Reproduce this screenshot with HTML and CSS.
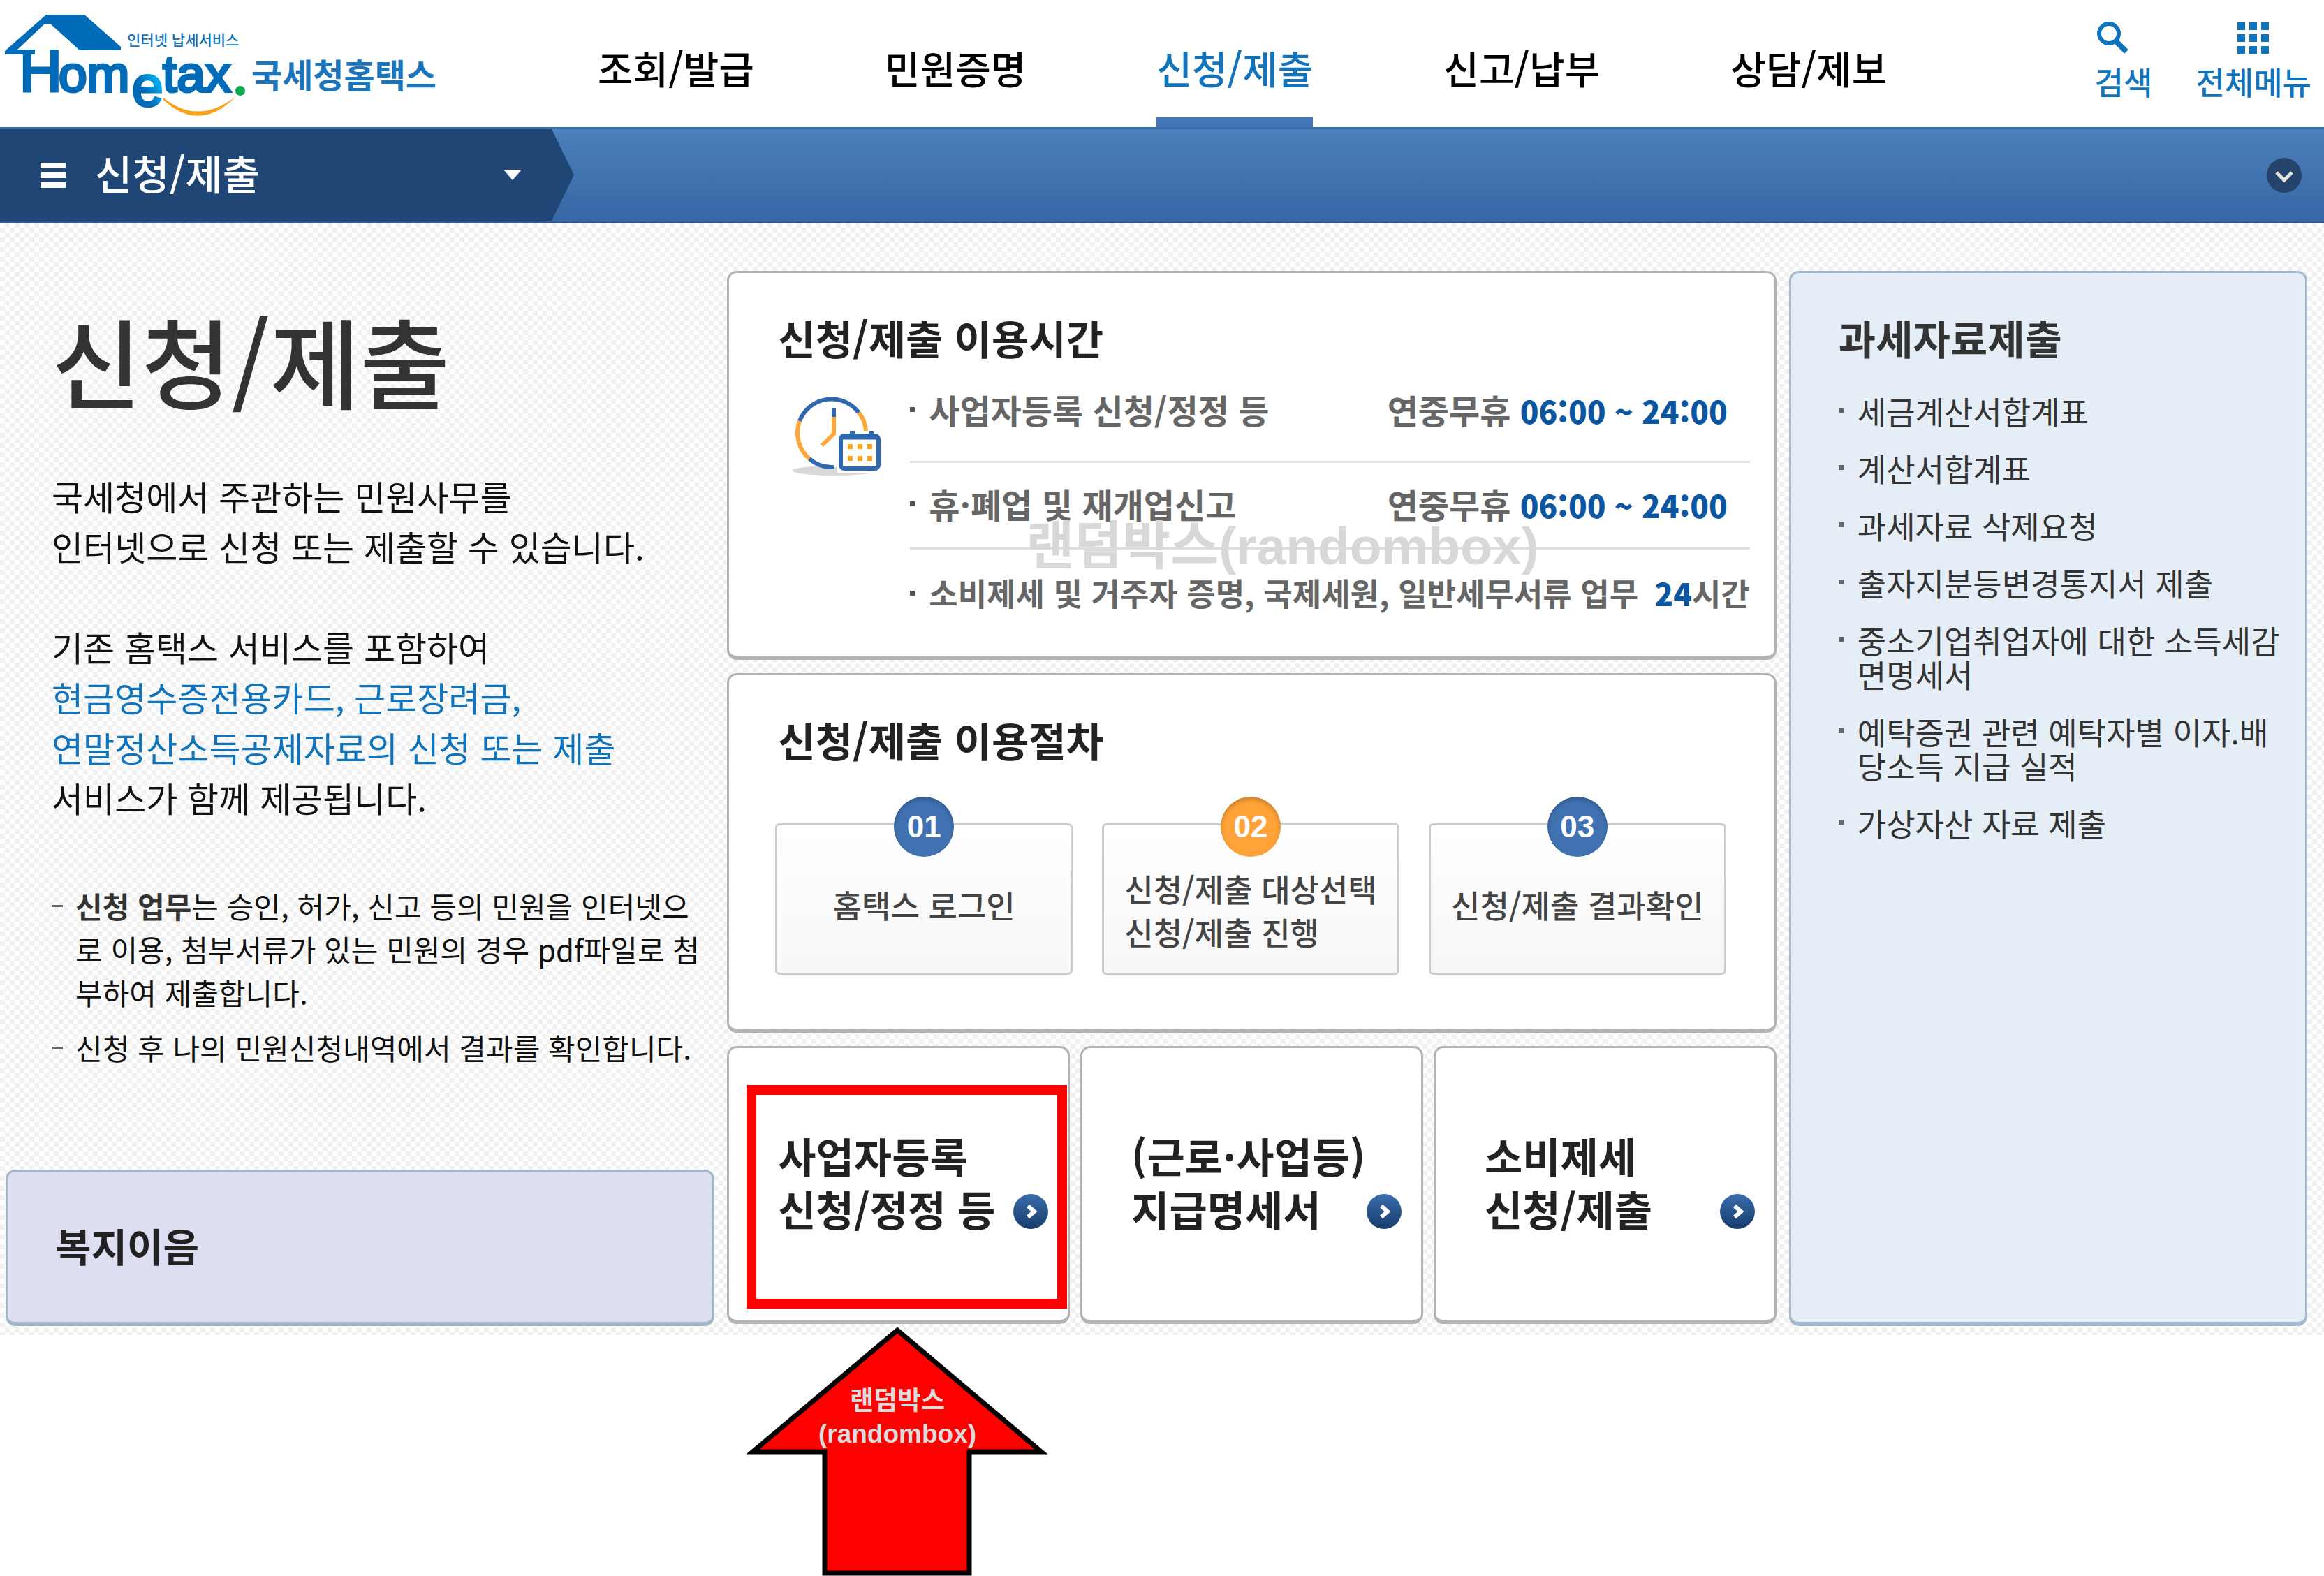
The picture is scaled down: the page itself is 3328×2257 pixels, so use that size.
FILE: index.html
```html
<!DOCTYPE html>
<html lang="ko">
<head>
  <meta charset="UTF-8">
  <meta name="viewport" content="width=device-width, initial-scale=1.0">
  <title>국세청홈택스 - 신청/제출</title>
  <link rel="stylesheet" href="styles.css">
</head>
<body>
  <!-- 상단 헤더 -->
  <header class="header">
    <a class="logo" href="#">
      <svg width="640" height="180" viewBox="0 0 640 180" role="img" aria-label="Hometax 국세청홈택스">
        <defs>
          <linearGradient id="eGrad" x1="0" y1="1" x2="1" y2="0">
            <stop offset="0.4" stop-color="#006bb8"/>
            <stop offset="0.75" stop-color="#00b4f0"/>
          </linearGradient>
        </defs>
        <path fill="#006bb8" d="M7 78V73L66 21H121L173 67V72H114L72 34H64L25 71H50V78Z"/>
        <text class="logo-tag" x="182" y="65">인터넷 납세서비스</text>
        <text class="logo-en logo-h" x="28" y="131">H</text>
        <text class="logo-en" x="84" y="131">om</text>
        <text class="logo-en logo-e" x="189" y="151">e</text>
        <text class="logo-en" x="233" y="131">tax</text>
        <ellipse cx="344" cy="130" rx="7" ry="7" fill="#0aa84f"/>
        <path fill="#f9a11b" d="M234 140Q284 180 338 138Q286 191 234 143Z"/>
        <text class="logo-ko" x="360" y="126">국세청홈택스</text>
      </svg>
    </a>
    <nav class="nav">
      <a href="#">조회/발급</a>
      <a href="#">민원증명</a>
      <a href="#" class="active">신청/제출</a>
      <a href="#">신고/납부</a>
      <a href="#">상담/제보</a>
    </nav>
    <div class="tools">
      <button class="tool tool-search" type="button">
        <svg width="50" height="48" viewBox="0 0 50 48">
          <circle cx="20" cy="18" r="14" fill="none" stroke="#0f74bc" stroke-width="6"/>
          <path d="M30 29L45 44" stroke="#0f74bc" stroke-width="8"/>
        </svg>
        검색
      </button>
      <button class="tool" type="button">
        <svg width="46" height="48" viewBox="0 0 46 48" fill="#0f74bc">
          <path d="M0 2h11v11H0zM17 2h11v11H17zM34 2h11v11H34zM0 19h11v11H0zM17 19h11v11H17zM34 19h11v11H34zM0 36h11v11H0zM17 36h11v11H17zM34 36h11v11H34z"/>
        </svg>
        전체메뉴
      </button>
    </div>
  </header>

  <!-- 현재 위치 -->
  <div class="location">
    <button class="location-menu" type="button">
      <svg width="36" height="36" viewBox="0 0 36 36" fill="#fff"><path d="M0 0h36v8H0zM0 14h36v8H0zM0 28h36v8H0z"/></svg>
      <span>신청/제출</span>
      <svg class="caret" width="26" height="16" viewBox="0 0 26 16"><path fill="#fff" d="M0 0h26L13 15z"/></svg>
    </button>
    <button class="location-open" type="button" aria-label="펼치기">
      <svg width="52" height="52" viewBox="0 0 52 52">
        <circle cx="26" cy="26" r="25" fill="#25446b"/>
        <path d="M15 22L26 33L37 22" fill="none" stroke="#e4e4dc" stroke-width="5"/>
      </svg>
    </button>
  </div>

  <main class="main">
    <!-- 왼쪽 소개 -->
    <section class="intro">
      <h1>신청/제출</h1>
      <p>국세청에서 주관하는 민원사무를<br>인터넷으로 신청 또는 제출할 수 있습니다.</p>
      <p>기존 홈택스 서비스를 포함하여<br><em>현금영수증전용카드, 근로장려금,<br>연말정산소득공제자료의 신청 또는 제출</em><br>서비스가 함께 제공됩니다.</p>
      <ul class="notes">
        <li><b>신청 업무</b>는 승인, 허가, 신고 등의 민원을 인터넷으<br>로 이용, 첨부서류가 있는 민원의 경우 pdf파일로 첨<br>부하여 제출합니다.</li>
        <li>신청 후 나의 민원신청내역에서 결과를 확인합니다.</li>
      </ul>
      <a class="welfare" href="#">복지이음</a>
    </section>

    <section class="center">
      <!-- 이용시간 -->
      <div class="box">
        <h2>신청/제출 이용시간</h2>
        <div class="hours">
          <svg class="clock" width="130" height="116" viewBox="0 0 130 116">
            <ellipse cx="62" cy="107" rx="60" ry="7" fill="#d9d9d9"/>
            <g fill="none" stroke-width="6">
              <circle cx="58" cy="53" r="49" fill="#fff" stroke="none"/>
              <path stroke="#2f68b0" d="M12 36A49 49 0 0 1 97 24"/>
              <path stroke="#ffa638" d="M97 24A49 49 0 0 1 107 50"/>
              <path stroke="#ffa638" d="M12 36A49 49 0 0 0 26 90"/>
              <path stroke="#2f68b0" d="M26 90A49 49 0 0 0 61 102"/>
              <path stroke="#ffa638" d="M61 30V54L44 71"/>
              <path stroke="#2f68b0" d="M61 17V30"/>
            </g>
            <rect x="66" y="52" width="64" height="58" fill="#fff"/>
            <path fill="#2f68b0" d="M84 50h7v8h-7zM111 50h7v8h-7z"/>
            <rect x="71" y="57" width="54" height="47" rx="5" fill="#fff" stroke="#2f68b0" stroke-width="6"/>
            <path stroke="#2f68b0" stroke-width="3" d="M71 61H125"/>
            <path fill="#ffa01e" d="M81 69h7v7h-7zM95 69h7v7h-7zM109 69h7v7h-7zM81 86h7v7h-7zM95 86h7v7h-7zM109 86h7v7h-7z"/>
          </svg>
          <ul class="hours-list">
            <li class="wide"><span>사업자등록 신청/정정 등</span><span class="time">연중무휴 <b>06:00 ~ 24:00</b></span></li>
            <li class="wide"><span>휴·폐업 및 재개업신고</span><span class="time">연중무휴 <b>06:00 ~ 24:00</b></span></li>
            <li><span>소비제세 및 거주자 증명, 국제세원, 일반세무서류 업무</span><span class="time"><b>24</b>시간</span></li>
          </ul>
        </div>
        <div class="watermark">랜덤박스(randombox)</div>
      </div>

      <!-- 이용절차 -->
      <div class="box">
        <h2>신청/제출 이용절차</h2>
        <ol class="steps">
          <li><span class="num">01</span><p>홈택스 로그인</p></li>
          <li class="two-line"><span class="num orange">02</span><p>신청/제출 대상선택<br>신청/제출 진행</p></li>
          <li><span class="num">03</span><p>신청/제출 결과확인</p></li>
        </ol>
      </div>

      <!-- 바로가기 -->
      <div class="links">
        <div class="box link-box">
          <a href="#"><span>사업자등록<br>신청/정정 등</span>
            <svg class="go" width="52" height="52" viewBox="0 0 52 52">
              <defs>
                <linearGradient id="goGrad" x1="0" y1="0" x2="0" y2="1">
                  <stop offset="0" stop-color="#3a6cac"/>
                  <stop offset="1" stop-color="#173c6c"/>
                </linearGradient>
              </defs>
              <circle cx="26" cy="26" r="25" fill="url(#goGrad)"/>
              <path d="M22 18L31 26L22 34" fill="none" stroke="#fff" stroke-width="6"/>
            </svg>
          </a>
          <div class="highlight"></div>
          <svg class="pointer" width="434" height="357" viewBox="0 0 434 357">
            <path fill="#f00" stroke="#000" stroke-width="7" d="M217 5L423 179H320V353H113V179H10L217 5Z"/>
            <text x="217" y="119">랜덤박스</text>
            <text x="217" y="166">(randombox)</text>
          </svg>
        </div>
        <div class="box link-box">
          <a href="#"><span>(근로·사업등)<br>지급명세서</span>
            <svg class="go" width="52" height="52" viewBox="0 0 52 52">
              <circle cx="26" cy="26" r="25" fill="url(#goGrad)"/>
              <path d="M22 18L31 26L22 34" fill="none" stroke="#fff" stroke-width="6"/>
            </svg>
          </a>
        </div>
        <div class="box link-box">
          <a href="#"><span>소비제세<br>신청/제출</span>
            <svg class="go" width="52" height="52" viewBox="0 0 52 52">
              <circle cx="26" cy="26" r="25" fill="url(#goGrad)"/>
              <path d="M22 18L31 26L22 34" fill="none" stroke="#fff" stroke-width="6"/>
            </svg>
          </a>
        </div>
      </div>
    </section>

    <!-- 과세자료제출 -->
    <aside class="box side">
      <h2>과세자료제출</h2>
      <ul>
        <li><a href="#">세금계산서합계표</a></li>
        <li><a href="#">계산서합계표</a></li>
        <li><a href="#">과세자료 삭제요청</a></li>
        <li><a href="#">출자지분등변경통지서 제출</a></li>
        <li><a href="#">중소기업취업자에 대한 소득세감<br>면명세서</a></li>
        <li><a href="#">예탁증권 관련 예탁자별 이자.배<br>당소득 지급 실적</a></li>
        <li><a href="#">가상자산 자료 제출</a></li>
      </ul>
    </aside>
  </main>
</body>
</html>
```

FILE: styles.css
```css
* {
  box-sizing: border-box;
}
body {
  margin: 0;
  min-height: 100vh;
  background: #fff;
  color: #111;
  font-family: "Noto Sans CJK KR", sans-serif;
}
h1, h2, p, ul, ol {
  margin: 0;
  padding: 0;
}
ul, ol {
  list-style: none;
}
a {
  color: inherit;
  text-decoration: none;
}
button {
  border: 0;
  padding: 0;
  background: none;
  font-family: inherit;
  cursor: pointer;
}
svg {
  display: block;
  flex: none;
}

/* header */
.header {
  display: flex;
  height: 182px;
}
.logo-tag {
  font-size: 21px;
  font-weight: 500;
  fill: #0f74bc;
}
.logo-en {
  font-family: "Liberation Sans", sans-serif;
  font-size: 73px;
  fill: #006bb8;
  stroke: #006bb8;
  stroke-width: 4px;
}
.logo-h {
  font-size: 84px;
}
.logo-e {
  font-size: 80px;
  fill: url(#eGrad);
  stroke: url(#eGrad);
}
.logo-ko {
  font-size: 48px;
  font-weight: bold;
  fill: #1a75bd;
}
.nav {
  display: flex;
  gap: 187px;
  margin-left: 216px;
}
.nav a {
  padding: 48px 0 4px;
  font-size: 55px;
  line-height: 96px;
  font-weight: 500;
  color: #000;
  white-space: nowrap;
}
.nav .active {
  color: #0f74bc;
  border-bottom: 14px solid #4277b7;
}
.tools {
  display: flex;
  align-items: flex-start;
  gap: 62px;
  margin-left: auto;
  padding: 30px 18px 0 0;
}
.tool {
  display: flex;
  flex-direction: column;
  align-items: center;
  gap: 7px;
  font-size: 45px;
  line-height: 64px;
  font-weight: 500;
  color: #0f74bc;
}
.tool-search {
  align-items: flex-start;
}

/* location bar */
.location {
  display: flex;
  align-items: center;
  justify-content: space-between;
  height: 137px;
  padding-right: 31px;
  border-top: 3px solid #3a6ca5;
  border-bottom: 3px solid #2a5a9f;
  background: linear-gradient(#4b80bc, #3767a6);
}
.location-menu {
  display: flex;
  align-items: center;
  width: 822px;
  height: 100%;
  padding: 0 75px 0 58px;
  background: #204675;
  clip-path: polygon(0 0, 790px 0, 100% 50%, 790px 100%, 0 100%);
  color: #fff;
  font-size: 58px;
  font-weight: 500;
}
.location-menu span {
  margin-left: 42px;
  padding-bottom: 8px;
}
.caret {
  margin-left: auto;
}

/* body */
.main {
  display: grid;
  grid-template-columns: 1015fr 1502fr 742fr;
  gap: 18px;
  padding: 69px 24px 13px 8px;
  background: repeating-conic-gradient(#f1f1f1 0 25%, #fff 0 50%) 0 0 / 14px 14px;
}
.intro {
  display: flex;
  flex-direction: column;
  padding-top: 46px;
}
.intro h1 {
  margin: 0 0 80px 66px;
  font-size: 140px;
  line-height: 160px;
  font-weight: 500;
  color: #333;
}
.intro p {
  margin: 0 0 72px 66px;
  font-size: 49px;
  line-height: 72px;
}
.intro em {
  font-style: normal;
  color: #0f74bc;
}
.notes {
  margin: 16px 0 0 66px;
  font-size: 42px;
  line-height: 62px;
}
.notes li {
  display: flow-root;
  padding-left: 34px;
  margin-bottom: 17px;
  white-space: nowrap;
}
.notes li::before {
  content: "";
  float: left;
  width: 16px;
  height: 3px;
  margin: 30px 0 0 -34px;
  background: #666;
}
.notes b {
  font-weight: 700;
  color: #333;
}
.welfare {
  margin-top: auto;
  padding: 66px 68px 71px;
  border: 3px solid #a3b5c7;
  border-bottom-width: 6px;
  border-radius: 14px;
  background: #dedef3;
  font-size: 56px;
  line-height: 78px;
  font-weight: bold;
  color: #222;
}

/* boxes */
.center {
  display: flex;
  flex-direction: column;
  gap: 19px;
  padding-bottom: 3px;
}
.box {
  position: relative;
  padding: 57px 35px 55px 70px;
  border: 3px solid #b3b3b3;
  border-bottom-width: 6px;
  border-radius: 14px;
  background: #fff;
}
.box h2 {
  font-size: 58px;
  line-height: 70px;
  font-weight: bold;
  color: #222;
}
.hours {
  display: flex;
  gap: 40px;
  margin-top: 33px;
  padding-left: 19px;
}
.clock {
  margin-top: 16px;
}
.hours-list {
  flex: 1;
}
.hours-list li {
  display: flex;
  align-items: center;
  padding: 23px 0 28px;
  border-bottom: 3px solid #ddd;
  font-size: 45px;
  line-height: 70px;
  font-weight: bold;
  color: #666;
  white-space: nowrap;
}
.hours-list li:first-child {
  padding: 0 0 39px;
}
.hours-list li:last-child {
  padding: 27px 0 0;
  border-bottom: 0;
}
.hours-list li::before {
  content: "";
  width: 7px;
  height: 7px;
  margin-right: 20px;
  background: #555;
}
.hours-list .wide {
  font-size: 48px;
}
.time {
  margin-left: auto;
}
.wide .time {
  padding-right: 32px;
}
.time b {
  font-size: 44px;
  line-height: 1;
  color: #0a56a0;
}
.watermark {
  position: absolute;
  top: 341px;
  left: 425px;
  font-family: "Liberation Sans", "Noto Sans CJK KR", sans-serif;
  font-size: 75px;
  line-height: 100px;
  font-weight: bold;
  color: #d8d8d8;
}

/* steps */
.steps {
  display: grid;
  grid-template-columns: repeat(3, 1fr);
  gap: 42px;
  margin: 85px 34px 22px -4px;
}
.steps li {
  display: flex;
  position: relative;
  justify-content: center;
  align-items: center;
  height: 217px;
  padding-top: 16px;
  border: 3px solid #ccc;
  border-radius: 6px;
  background: linear-gradient(#fff, #f7f7f7);
  font-size: 45px;
  line-height: 62px;
  font-weight: 500;
  color: #444;
}
.steps .two-line {
  padding-top: 32px;
}
.num {
  position: absolute;
  top: -41px;
  left: calc(50% - 43px);
  width: 86px;
  height: 86px;
  border-radius: 50%;
  background: #4072b2;
  box-shadow: inset 0 4px 6px rgba(0, 0, 0, 0.2);
  font-family: "Liberation Sans", sans-serif;
  font-size: 44px;
  line-height: 86px;
  font-weight: bold;
  text-align: center;
  color: #fff;
}
.num.orange {
  background: #ffa238;
}

/* shortcut boxes */
.links {
  display: grid;
  grid-template-columns: repeat(3, 1fr);
  gap: 15px;
}
.link-box {
  padding: 116px 27px 121px 70px;
}
.link-box a {
  display: flex;
  justify-content: space-between;
  align-items: flex-end;
  font-size: 59px;
  line-height: 76px;
  font-weight: bold;
  color: #222;
  white-space: nowrap;
}
.go {
  margin-bottom: 8px;
}
.highlight {
  position: absolute;
  top: 53px;
  right: 1px;
  bottom: 16px;
  left: 25px;
  border: 14px solid #f00;
  pointer-events: none;
}
.pointer {
  position: absolute;
  top: 399px;
  left: 24px;
  font-family: "Liberation Sans", "Noto Sans CJK KR", sans-serif;
  font-size: 37px;
  font-weight: bold;
  fill: #dcdcdc;
  text-anchor: middle;
}

/* right column */
.side {
  padding-right: 20px;
  padding-left: 68px;
  border-color: #a5b8cf;
  background: #e5edf6;
}
.side h2 {
  color: #333;
}
.side ul {
  margin-top: 46px;
  font-size: 45px;
  line-height: 49px;
  color: #333;
}
.side li {
  display: flex;
  gap: 20px;
  margin-bottom: 33px;
  white-space: nowrap;
}
.side li::before {
  content: "";
  width: 7px;
  height: 7px;
  margin-top: 20px;
  background: #666;
}
```
